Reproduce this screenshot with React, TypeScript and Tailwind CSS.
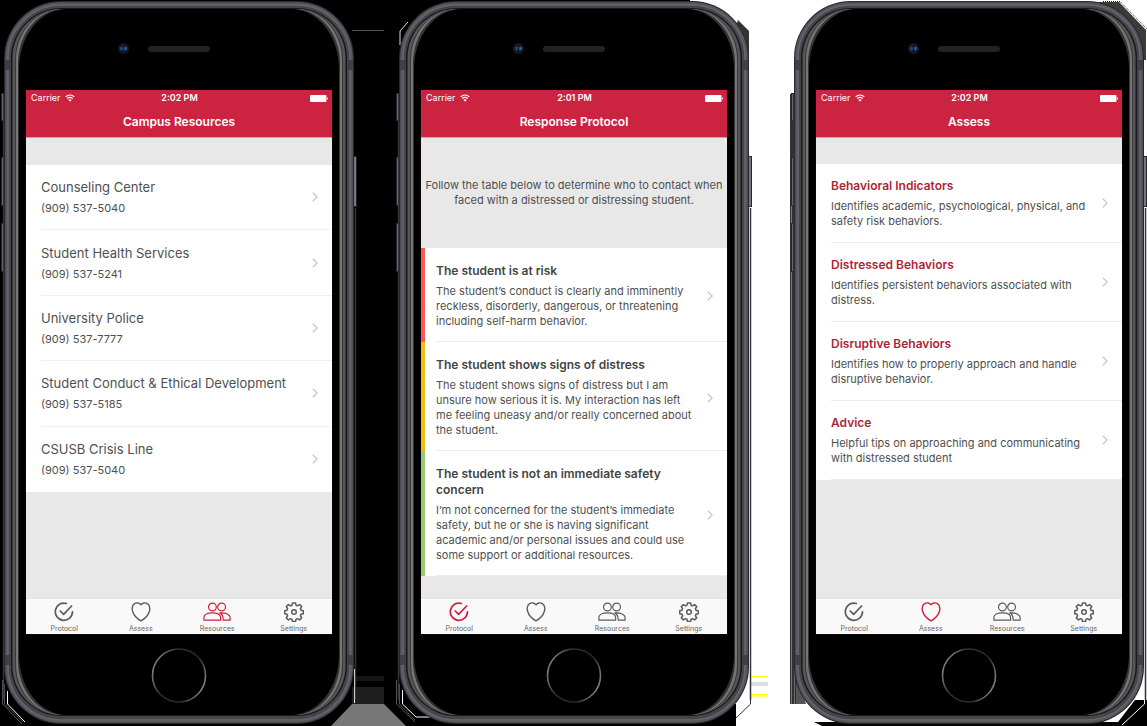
import React from 'react';

type Tab = 'Protocol' | 'Assess' | 'Resources' | 'Settings';

const TABS: Tab[] = ['Protocol', 'Assess', 'Resources', 'Settings'];

const RESOURCES = [
  { name: 'Counseling Center', phone: '(909) 537-5040' },
  { name: 'Student Health Services', phone: '(909) 537-5241' },
  { name: 'University Police', phone: '(909) 537-7777' },
  { name: 'Student Conduct & Ethical Development', phone: '(909) 537-5185' },
  { name: 'CSUSB Crisis Line', phone: '(909) 537-5040' },
];

const PROTOCOL = [
  {
    title: ['The student is at risk'],
    lines: [
      'The student’s conduct is clearly and imminently',
      'reckless, disorderly, dangerous, or threatening',
      'including self-harm behavior.',
    ],
    bar: 'bg-[#ff5a52]',
  },
  {
    title: ['The student shows signs of distress'],
    lines: [
      'The student shows signs of distress but I am',
      'unsure how serious it is. My interaction has left',
      'me feeling uneasy and/or really concerned about',
      'the student.',
    ],
    bar: 'bg-[#f3bd13]',
  },
  {
    title: ['The student is not an immediate safety', 'concern'],
    lines: [
      'I’m not concerned for the student’s immediate',
      'safety, but he or she is having significant',
      'academic and/or personal issues and could use',
      'some support or additional resources.',
    ],
    bar: 'bg-[#95c973]',
  },
];

const ASSESS = [
  { title: 'Behavioral Indicators', lines: ['Identifies academic, psychological, physical, and', 'safety risk behaviors.'] },
  { title: 'Distressed Behaviors', lines: ['Identifies persistent behaviors associated with', 'distress.'] },
  { title: 'Disruptive Behaviors', lines: ['Identifies how to properly approach and handle', 'disruptive behavior.'] },
  { title: 'Advice', lines: ['Helpful tips on approaching and communicating', 'with distressed student'] },
];

function Lines({ lines }: { lines: string[] }) {
  return (
    <>
      {lines.map((line) => (
        <span key={line} className="block whitespace-nowrap">
          {line}
        </span>
      ))}
    </>
  );
}

function Chevron() {
  return (
    <svg viewBox="0 0 6 10" className="h-[10px] w-[6px] shrink-0" fill="none" stroke="#c4c4c8" strokeWidth="1.2" aria-hidden="true">
      <path d="M0.8 0.8 5.2 5 0.8 9.2" />
    </svg>
  );
}

function TabIcon({ tab }: { tab: Tab }) {
  const common = {
    fill: 'none',
    stroke: 'currentColor',
    strokeLinecap: 'round' as const,
    strokeLinejoin: 'round' as const,
    'aria-hidden': true,
  };
  if (tab === 'Protocol') {
    return (
      <svg viewBox="0 0 20 20" className="size-5" {...common} strokeWidth="1.7">
        <path d="M12.4 1.5A8.6 8.6 0 1 0 18.5 9.8" />
        <path d="M6.2 9 9.6 12.4 17.6 4" />
      </svg>
    );
  }
  if (tab === 'Assess') {
    return (
      <svg viewBox="0 0 20 20" className="size-5" {...common} strokeWidth="1.4">
        <path d="M10 2.8C8.6.8 5.6.3 3.6 1.7 1.2 3.3.8 6.4 1.6 9.2 2.8 13.2 6.6 17 10 18.8 13.4 17 17.2 13.2 18.4 9.2 19.2 6.4 18.8 3.3 16.4 1.7 14.4.3 11.4.8 10 2.8Z" />
      </svg>
    );
  }
  if (tab === 'Resources') {
    return (
      <svg viewBox="0 0 28 20" className="h-5 w-7" {...common} strokeWidth="1.2">
        <circle cx="9.4" cy="5" r="3.9" />
        <circle cx="18.6" cy="5" r="3.9" />
        <path d="M.9 18.2V15.6C.9 12.6 4.6 10.8 9.4 10.8S17.6 12.6 17.6 15.6V18.2Z" />
        <path d="M16.8 10.9C22.8 10.3 27.1 12.8 27.1 15.6V18.2H20.2C20.3 15 19.6 12.4 16.8 10.9Z" />
      </svg>
    );
  }
  return (
    <svg viewBox="0 0 20 20" className="size-5" {...common} strokeWidth="1.5">
      <circle cx="10" cy="10" r="2.3" />
      <path d="M8.5 1.2h3l.6 2.3 1.4.6 2.1-1.3 2.1 2.1-1.3 2.1.6 1.4 2.3.6v3l-2.3.6-.6 1.4 1.3 2.1-2.1 2.1-2.1-1.3-1.4.6-.6 2.3h-3l-.6-2.3-1.4-.6-2.1 1.3-2.1-2.1 1.3-2.1-.6-1.4-2.3-.6V9l2.3-.6.6-1.4-1.3-2.1 2.1-2.1 2.1 1.3 1.4-.6Z" transform="translate(0 -.25)" />
    </svg>
  );
}

function StatusBar({ time }: { time: string }) {
  return (
    <div className="grid h-4 grid-cols-3 items-center pr-1 pl-[5px] text-[9px] leading-4">
      <div className="flex items-center gap-1">
        <span>Carrier</span>
        <svg viewBox="0 0 12 9" className="h-[8px] w-[10px]" fill="none" stroke="#fff" strokeWidth="1.4" aria-hidden="true">
          <path d="M.8 3.2C3.8.3 8.2.3 11.2 3.2M2.7 5.2C4.7 3.4 7.3 3.4 9.3 5.2" />
          <path d="M6 8.8 4 6.8C5.2 5.8 6.8 5.8 8 6.8Z" fill="#fff" stroke="none" />
        </svg>
      </div>
      <span className="text-center font-semibold">{time}</span>
      <svg viewBox="0 0 18 7" className="h-[7px] w-[18px] justify-self-end" fill="#fff" aria-hidden="true">
        <rect width="16.5" height="7" rx="1" />
        <path d="M17 2.2Q18 2.6 18 3.5T17 4.8Z" />
      </svg>
    </div>
  );
}

function Hardware({ id }: { id: string }) {
  return (
    <svg viewBox="0 0 357 726" className="absolute inset-x-0 top-0 -z-10 h-[726px] w-full" fill="none" aria-hidden="true">
      <defs>
        <linearGradient id={`${id}-home`} x1="0" y1=".3" x2="1" y2=".7">
          <stop offset="0" stopColor="#8a8a8e" />
          <stop offset=".3" stopColor="#303034" />
          <stop offset=".7" stopColor="#28282c" />
          <stop offset="1" stopColor="#8a8a8e" />
        </linearGradient>
      </defs>
      <g fill="#77767f" stroke="#27262d" strokeWidth="1">
        <rect x="1.5" y="93.5" width="3" height="27" />
        <rect x="1.5" y="157.5" width="3" height="48" />
        <rect x="1.5" y="223.5" width="3" height="48" />
        <rect x="353.5" y="156.5" width="3" height="50" />
      </g>
      <path d="M3.5 94V700M355.5 208V700" stroke="#34333a" strokeWidth="1.5" />
      <rect x="4" y="1" width="350" height="723" rx="57" fill="#29282d" />
      <rect x="5" y="2" width="348" height="721" rx="56" fill="#46454b" />
      <rect x="7" y="4" width="344" height="717" rx="54" stroke="#58575e" strokeWidth="3" />
      <rect x="8" y="5" width="342" height="715" rx="53" stroke="#66656c" strokeWidth="1.5" />
      <path d="M5 60h6v10H5ZM347 60h6v10h-6ZM5 655h6v10H5ZM347 655h6v10h-6Z" fill="#3c4146" />
      <rect x="11" y="8" width="336" height="708" rx="50" fill="#19191b" />
      <rect x="12.5" y="9" width="333" height="706" rx="49" fill="#565656" />
      <rect x="15" y="9" width="328" height="706" rx="47" ry="50" fill="#3a3a3a" />
      <rect x="16" y="9" width="326" height="706" rx="46" ry="51" fill="#757575" />
      <rect x="18" y="9" width="322" height="706" rx="46" ry="54" fill="#343434" />
      <rect x="19" y="9" width="320" height="706" rx="48" ry="60" fill="#000" />
      <rect x="25" y="89" width="308" height="546" fill="#0c0608" />
      <circle cx="123.5" cy="48.5" r="5.5" fill="#141820" />
      <ellipse cx="121.5" cy="48.5" rx="1.5" ry="2" fill="#1c4a86" />
      <ellipse cx="125.5" cy="48.5" rx="1.5" ry="2" fill="#255f9e" />
      <rect x="148" y="46" width="62" height="6" rx="3" fill="#222223" />
      <circle cx="179" cy="675.5" r="26.5" stroke={`url(#${id}-home)`} strokeWidth="1.6" />
    </svg>
  );
}

function Phone({ id, title, time, active, children }: { id: string; title: string; time: string; active: Tab; children: React.ReactNode }) {
  return (
    <section aria-label={title} className="relative isolate w-[357px] shrink-0 pt-[90px] pr-[25px] pb-[92px] pl-[26px]">
      <Hardware id={id} />
      <div className="flex min-h-[544px] flex-col bg-[#e8e8e8]">
        <header className="h-12 border-b border-[#c9a5ab] bg-[#cc2341] text-white">
          <StatusBar time={time} />
          <h1 className="text-center text-[12px] leading-[31px] font-semibold">{title}</h1>
        </header>
        <main className="flex-1">{children}</main>
        <nav className="grid h-9 grid-cols-4 border-t border-[#e2e2e2] bg-[#f9f9f9]">
          {TABS.map((tab) => (
            <button key={tab} type="button" className="flex flex-col items-center gap-0.5 pt-[3px] text-[7px] leading-[10px] text-[#666]">
              <span className={tab === active ? 'text-[#d0203f]' : 'text-[#5c5c5c]'}>
                <TabIcon tab={tab} />
              </span>
              {tab}
            </button>
          ))}
        </nav>
      </div>
    </section>
  );
}

function Backdrop() {
  return (
    <svg viewBox="0 0 1147 726" className="absolute top-0 left-0 h-[726px] w-full" preserveAspectRatio="none" fill="none" aria-hidden="true">
      <path d="M0 0H690V704H736V726H0Z" fill="#000" />
      <path d="M352 30.5H384" stroke="#555" />
      <path d="M354 676h30v5h-30Z" fill="#151517" />
      <path d="M352 687h32v17h-32Z" fill="#1f1f1f" />
      <path d="M352 704H384L406 726H331Z" fill="#777" />
      <path d="M354.5 669V703" stroke="#fff" />
      <path d="M7.5 691V704L25 722M402.5 690V704L416 717H430" stroke="#fff" />
      <path d="M2.5 680V704L22 724M4.5 684V704L23 722M396.5 680V704L415 722M399.5 684V704L415 720" stroke="#555" />
      <path d="M400 31 408 22M400 31V45" stroke="#ddd" />
      <path d="M738 20 749 31V60H725Z" fill="#34342f" />
      <path d="M750.5 665V704L736 718" stroke="#333" />
      <path d="M750 676.5H768M750 694.5H768M750 697H768" stroke="#ffff00" />
      <path d="M751 682h17v4h-17Z" fill="#dedede" />
      <path d="M790 94h6v610h-6Z" fill="#303034" />
      <path d="M791.5 200V704M794.5 200V704" stroke="#777" />
      <path d="M796 670V704H806Z" fill="#555" />
      <path d="M1085 2H1119L1146 30V60H1120Z" fill="#3b3b38" />
      <path d="M1103 1.5H1120L1147 29" stroke="#222" strokeDasharray="1 1" />
      <path d="M1135 700H1147V726H1115Z" fill="#000" />
      <path d="M1144.5 670V704L1122 725" stroke="#fff" />
      <path d="M814 722H1120V726H822Z" fill="#050505" />
    </svg>
  );
}

export default function App() {
  return (
    <div className="relative isolate min-h-[726px] overflow-hidden bg-white font-['Inter',sans-serif] text-[#4f4f4f]">
      <Backdrop />
      <div className="relative flex min-w-[1147px] items-start justify-between">
        <Phone id="resources" title="Campus Resources" time="2:02 PM" active="Resources">
          <ul className="mt-[27px] grid h-[327px] grid-rows-5 bg-white pl-[15px]">
            {RESOURCES.map((item) => (
              <li key={item.name} className="border-b border-[#f0f0f0] last:border-b-0">
                <a href="#" className="flex h-full items-center justify-between pr-[14px]">
                  <span className="pt-0.5">
                    <span className="block text-[13px] leading-[21px]">{item.name}</span>
                    <span className="block text-[11px] leading-[21px]">{item.phone}</span>
                  </span>
                  <Chevron />
                </a>
              </li>
            ))}
          </ul>
        </Phone>

        <Phone id="protocol" title="Response Protocol" time="2:01 PM" active="Protocol">
          <p className="flex h-[110px] flex-col justify-center text-center text-[11px] leading-[15px]">
            <Lines lines={['Follow the table below to determine who to contact when', 'faced with a distressed or distressing student.']} />
          </p>
          <ul className="bg-white">
            {PROTOCOL.map((item) => (
              <li key={item.bar} className="flex">
                <span className={`w-1 shrink-0 ${item.bar}`} />
                <a href="#" className="ml-[11px] flex flex-1 items-center justify-between border-b border-[#ececec] pt-[15px] pr-[14px] pb-3">
                  <span className="w-[252px]">
                    <strong className="block text-[12px] leading-4 font-semibold text-[#444]">
                      <Lines lines={item.title} />
                    </strong>
                    <span className="mt-[5px] block text-[11px] leading-[15px]">
                      <Lines lines={item.lines} />
                    </span>
                  </span>
                  <Chevron />
                </a>
              </li>
            ))}
          </ul>
        </Phone>

        <Phone id="assess" title="Assess" time="2:02 PM" active="Assess">
          <ul className="mt-[26px] bg-white pl-[15px]">
            {ASSESS.map((item) => (
              <li key={item.title} className="border-b border-[#ececec]">
                <a href="#" className="flex h-[78px] items-center justify-between pr-[14px]">
                  <span className="w-[252px]">
                    <strong className="block text-[12px] leading-4 font-semibold text-[#b01f38]">{item.title}</strong>
                    <span className="mt-[5px] block text-[11px] leading-[15px]">
                      <Lines lines={item.lines} />
                    </span>
                  </span>
                  <Chevron />
                </a>
              </li>
            ))}
          </ul>
        </Phone>
      </div>
    </div>
  );
}
